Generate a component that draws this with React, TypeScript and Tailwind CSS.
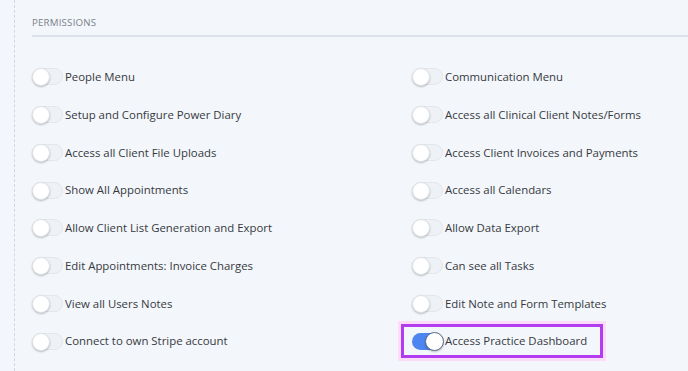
import React from 'react'

const left = [
  'People Menu',
  'Setup and Configure Power Diary',
  'Access all Client File Uploads',
  'Show All Appointments',
  'Allow Client List Generation and Export',
  'Edit Appointments: Invoice Charges',
  'View all Users Notes',
  'Connect to own Stripe account',
]

const right = [
  'Communication Menu',
  'Access all Clinical Client Notes/Forms',
  'Access Client Invoices and Payments',
  'Access all Calendars',
  'Allow Data Export',
  'Can see all Tasks',
  'Edit Note and Form Templates',
  'Access Practice Dashboard',
]

function Toggle({ on }: { on?: boolean }) {
  return (
    <span
      className={
        on
          ? 'relative inline-block w-[31px] h-[17px] rounded-full bg-[#4d86f1] shrink-0'
          : 'relative inline-block w-[31px] h-[17px] rounded-full bg-[#eef1f5] border border-[#e3e6eb] shrink-0'
      }
    >
      <span
        className={
          on
            ? 'absolute top-[-1px] right-[-1px] w-[19px] h-[19px] rounded-full bg-white border border-[#5b6b8a] shadow-[0_1px_2px_rgba(0,0,0,0.25)]'
            : 'absolute top-[-1px] left-[-1px] w-[18px] h-[18px] rounded-full bg-white border border-[#e0e3e8] shadow-[0_1px_2px_rgba(0,0,0,0.25)]'
        }
      />
    </span>
  )
}

function Row({ label, on, highlight }: { label: string; on?: boolean; highlight?: boolean }) {
  return (
    <div className="relative h-[37.75px] flex items-center gap-[2px]">
      {highlight && (
        <div className="absolute left-[-11px] top-[2px] w-[202px] h-[34px] border-[3px] border-[#b43cf0] shadow-[0_0_0_3px_#fbdcfb]" />
      )}
      <Toggle on={on} />
      <span className="text-[11.4px] text-[#363a40] leading-none whitespace-nowrap">{label}</span>
    </div>
  )
}

export default function App() {
  return (
    <div className="w-[688px] h-[371px] bg-[#f3f6fb] overflow-hidden font-['Open_Sans',sans-serif]">
      <div className="ml-[14px] h-full border-l border-dashed border-[#d3d6dc] pl-[17px] pt-[17px]">
        <div className="text-[9.7px] tracking-[0.2px] text-[#7a8089] leading-[12px]">PERMISSIONS</div>
        <div className="mt-[6px] h-[2px] bg-[#dde1ea]" />
        <div className="mt-[21px] grid grid-cols-[380px_1fr]">
          <div className="flex flex-col">
            {left.map((l) => (
              <Row key={l} label={l} />
            ))}
          </div>
          <div className="flex flex-col">
            {right.map((l, i) => (
              <Row key={l} label={l} on={i === 7} highlight={i === 7} />
            ))}
          </div>
        </div>
      </div>
    </div>
  )
}
